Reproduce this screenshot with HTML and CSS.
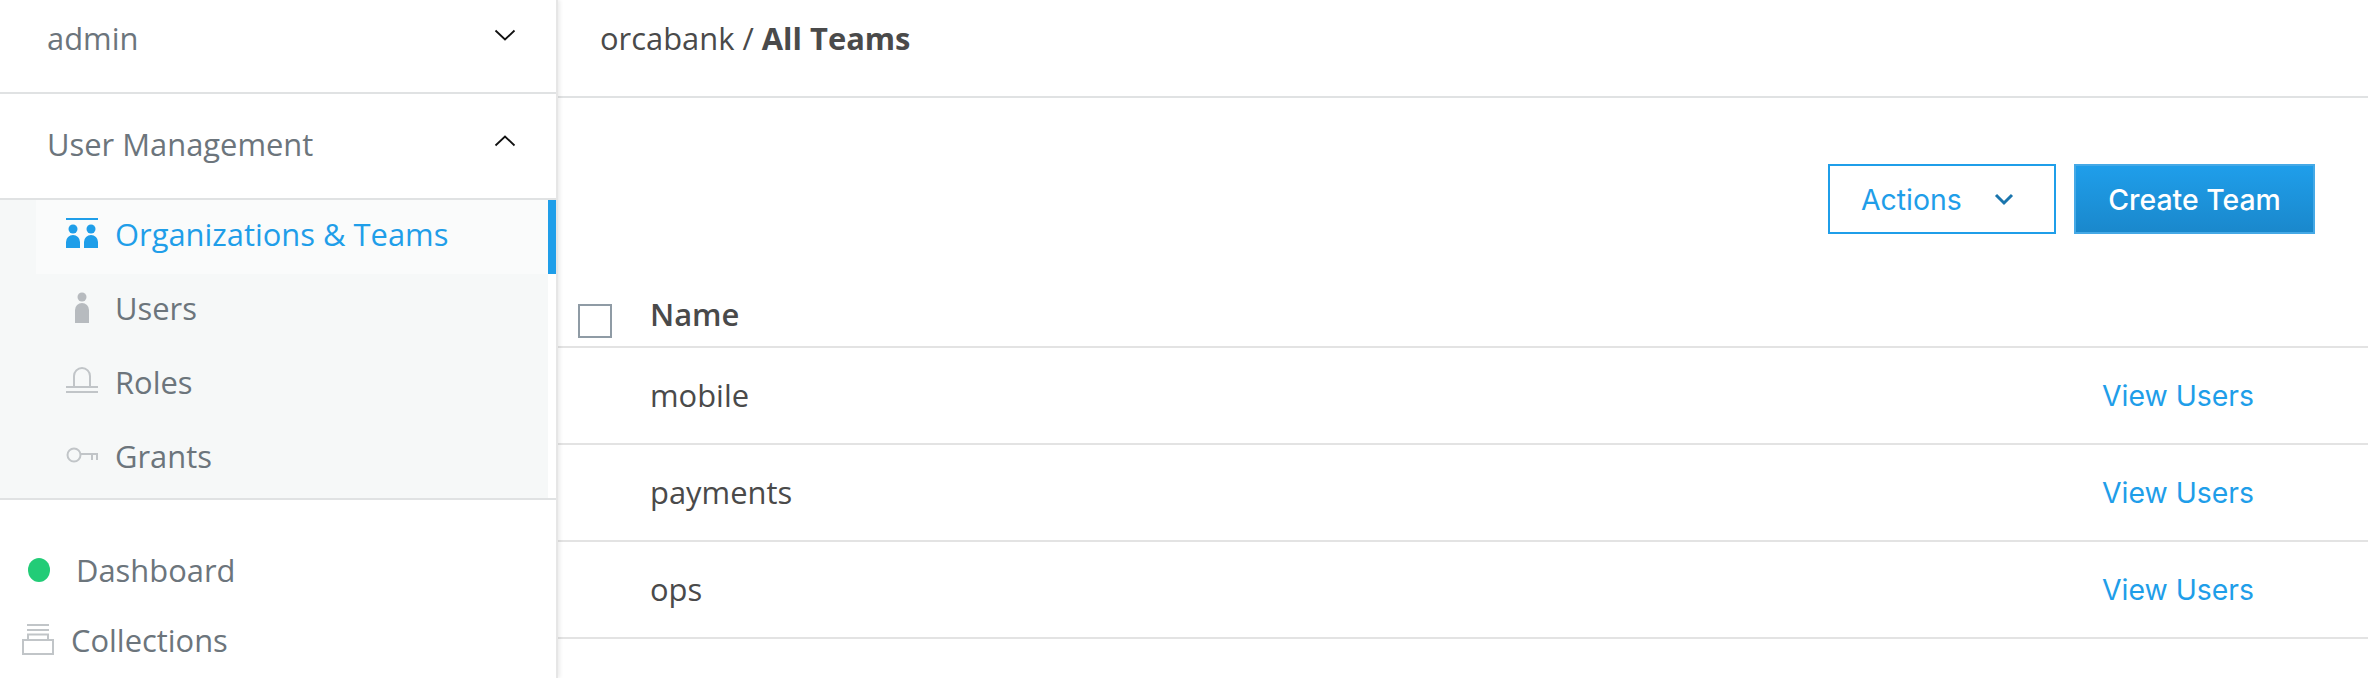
FILE: index.html
```html
<!DOCTYPE html>
<html lang="en">
<head>
<meta charset="utf-8">
<title>All Teams</title>
<link rel="stylesheet" href="styles.css">
</head>
<body>
<div class="app">
  <aside class="sidebar">
    <div class="section section-admin">
      <span>admin</span>
      <svg class="chev" width="22" height="12" viewBox="0 0 22 12"><path d="M1.5 1.5 L11 10.500 L20.5 1.5"/></svg>
    </div>
    <div class="section section-user">
      <span>User Management</span>
      <svg class="chev" width="22" height="12" viewBox="0 0 22 12"><path d="M1.5 10.5 L11 1.5 L20.5 10.5"/></svg>
    </div>
    <nav class="subnav">
      <a class="subitem active">
        <svg class="icon" width="32" height="32" viewBox="0 0 32 32"><rect x="0" y="0" width="32" height="2" fill="#1f9ee9"/><circle cx="7" cy="11" r="4.5" fill="#1f9ee9"/><circle cx="25" cy="11" r="4.5" fill="#1f9ee9"/><path d="M0 30 V24 a7 7 0 0 1 14 0 V30 Z M18 30 V24 a7 7 0 0 1 14 0 V30 Z" fill="#1f9ee9"/></svg>
        <span>Organizations &amp; Teams</span>
      </a>
      <a class="subitem">
        <svg class="icon" width="32" height="32" viewBox="0 0 32 32"><circle cx="16" cy="5" r="4.5" fill="#b7bbbf"/><path d="M9 31 V18 a7 7 0 0 1 14 0 V31 Z" fill="#b7bbbf"/></svg>
        <span>Users</span>
      </a>
      <a class="subitem">
        <svg class="icon" width="32" height="32" viewBox="0 0 32 32"><path d="M8 21 V10 a8 8 0 0 1 16 0 V21" fill="none" stroke="#c1c5c8" stroke-width="2"/><path d="M0 21 H32 M0 26 H32" stroke="#c1c5c8" stroke-width="2"/></svg>
        <span>Roles</span>
      </a>
      <a class="subitem">
        <svg class="icon" width="32" height="32" viewBox="0 0 32 32"><circle cx="8" cy="15" r="6.5" fill="none" stroke="#c1c5c8" stroke-width="2"/><path d="M14 14 H32 M26 14 V20 M31 14 V20" fill="none" stroke="#c1c5c8" stroke-width="2"/></svg>
        <span>Grants</span>
      </a>
    </nav>
    <div class="links">
      <a class="link link-dash"><i class="dot"></i><span>Dashboard</span></a>
      <a class="link link-coll">
        <svg class="icon icon-coll" width="32" height="32" viewBox="0 0 32 32"><path d="M5 2 H27 M5 7 H27" stroke="#c1c5c8" stroke-width="2"/><path d="M6 17 V11.500 H26 V17" fill="none" stroke="#c1c5c8" stroke-width="2"/><rect x="1" y="17" width="30" height="14" fill="none" stroke="#c1c5c8" stroke-width="2"/></svg>
        <span>Collections</span>
      </a>
    </div>
  </aside>
  <main class="main">
    <header class="crumbs">orcabank / <strong>All Teams</strong></header>
    <div class="toolbar">
      <button class="btn btn-actions">
        <span>Actions</span>
        <svg width="20" height="13" viewBox="0 0 20 13"><path d="M2 2 L10 10 L18 2" fill="none" stroke="#1a75ad" stroke-width="3"/></svg>
      </button>
      <button class="btn btn-create">Create Team</button>
    </div>
    <div class="row row-head">
      <i class="check"></i>
      <span class="name">Name</span>
    </div>
    <div class="row"><span class="name">mobile</span><a class="view">View Users</a></div>
    <div class="row"><span class="name">payments</span><a class="view">View Users</a></div>
    <div class="row"><span class="name">ops</span><a class="view">View Users</a></div>
  </main>
</div>
</body>
</html>
```

FILE: styles.css
```css
* { box-sizing: border-box; }
html, body { margin: 0; height: 678px; overflow: hidden; background: #fff; }
body { font-family: "Open Sans", "Liberation Sans", sans-serif; font-size: 30.9px; color: #4a4a4a; }
.app { display: flex; height: 678px; }

.sidebar {
  width: 558px;
  flex: none;
  border-right: 2px solid #e6e6e6;
  box-shadow: 2px 0 4px rgba(0, 0, 0, 0.08);
  color: #6c757c;
  display: flex;
  flex-direction: column;
  position: relative;
}
.section {
  display: flex;
  justify-content: space-between;
  padding: 0 40px 0 47px;
  border-bottom: 2px solid #e0e2e3;
}
.section-admin { height: 94px; padding-top: 17px; }
.section-user { height: 106px; padding-top: 29px; }
.chev { margin-top: 12px; }
.chev path { fill: none; stroke: #111; stroke-width: 1.8; }

.subnav {
  background: #f6f8f8;
  margin-right: 8px;
  padding-bottom: 2px;
}
.subitem {
  height: 74px;
  padding-left: 66px;
  padding-bottom: 6px;
  display: flex;
  align-items: center;
  gap: 17px;
}
.subitem.active {
  margin-left: 36px;
  margin-right: -8px;
  padding-left: 30px;
  background: #fafbfb;
  border-right: 8px solid #1f9ee9;
  color: #1f9ee9;
}
.icon { flex: none; }
.icon-coll { margin-bottom: 2px; }

.links { border-top: 2px solid #e0e2e3; padding-top: 48px; }
.link { display: flex; align-items: center; }
.link-dash { height: 44px; padding-left: 28px; gap: 26px; }
.dot { width: 22px; height: 24px; border-radius: 50%; background: #22cc77; flex: none; }
.link-coll { height: 44px; margin-top: 26px; padding-left: 22px; gap: 17px; }

.main { flex: 1; min-width: 0; }
.crumbs { height: 98px; padding: 17px 0 0 42px; border-bottom: 2px solid #e0e2e3; }
.crumbs strong { font-weight: 700; }
.toolbar {
  height: 70px;
  margin-top: 66px;
  padding-right: 53px;
  display: flex;
  justify-content: flex-end;
  gap: 18px;
}
.btn {
  height: 70px;
  font-family: Inter, "Liberation Sans", sans-serif;
  font-size: 28.4px;
  display: flex;
  align-items: center;
  border-radius: 0;
  padding: 0;
}
.btn-actions {
  width: 228px;
  padding-left: 31px;
  gap: 32px;
  background: #fff;
  border: 2px solid #1f9ee9;
  color: #1f9ee9;
}
.btn-create {
  width: 241px;
  justify-content: center;
  font-weight: 500;
  background: linear-gradient(#1f9eea, #1a88cc);
  border: 2px solid #45a9e6;
  color: #fff;
}
.row {
  height: 97px;
  padding: 0 114px 0 92px;
  display: flex;
  align-items: center;
  justify-content: space-between;
  border-bottom: 2px solid #e3e3e3;
}
.name { margin-bottom: 2px; }
.row-head {
  height: 114px;
  align-items: flex-end;
  justify-content: flex-start;
  padding: 0 0 8px 20px;
  gap: 38px;
}
.row-head .name { font-weight: 600; margin-bottom: 3px; }
.check { width: 34px; height: 34px; border: 2px solid #8f9ba5; flex: none; background: #fff; }
.view { font-family: Inter, "Liberation Sans", sans-serif; font-size: 28.4px; color: #1f9ee9; }
```
